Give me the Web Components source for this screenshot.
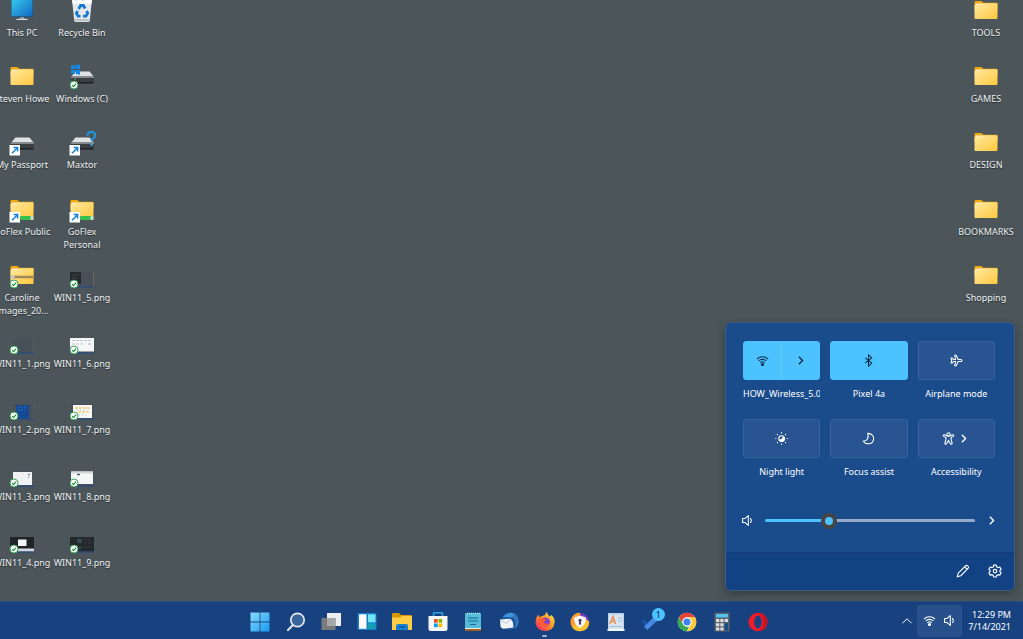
<!DOCTYPE html>
<html lang="en">
<head>
<meta charset="utf-8">
<meta name="viewport" content="width=device-width, initial-scale=1">
<title>Desktop</title>
<style>
    body {
        margin: 0;
        font-family: "Noto Sans", "Open Sans", sans-serif;
        font-size: 9px;
        color: #fff;
    }
</style>
</head>
<body>
<desktop-shell></desktop-shell>

<script>
// Gradients used by several icons
const folderDefs = `
    <defs><linearGradient id="f" x1="0" y1="0" x2="1" y2="1">
        <stop offset="0" stop-color="#ffe9a2"/><stop offset="1" stop-color="#ffc83d"/>
    </linearGradient></defs>`

const folder = `${folderDefs}
    <path d="M.5 4a1 1 0 0 1 1-1h5.800l2.200 1.800H22.500a1 1 0 0 1 1 1V12H.5z" fill="#f0a90c"/>
    <path d="M1.500 5.500h7v2h-7z" fill="#f4f1e6"/>
    <path d="M.5 7.600a1 1 0 0 1 1-1h6l1.600-1.400h13.400a1 1 0 0 1 1 1V20a1 1 0 0 1-1 1h-21a1 1 0 0 1-1-1z" fill="url(#f)"/>`

const drive = `
    <path d="M5.500 7.500h14l4.500 5.500H1z" fill="#dfe1e3"/>
    <rect x="1" y="12.500" width="23" height="7.500" rx=".8" fill="#3c3f42"/>
    <path d="M1 12.500h23v1.500H1z" fill="#85898c"/>
    <path d="M2 18h21v1.300H2z" fill="#1f2123"/>`

const syncBadge = `
    <circle cx="4" cy="21" r="4" fill="#fff" stroke="#2d9c4b" stroke-width=".9"/>
    <path d="M2 21.200l1.500 1.500 2.600-3" fill="none" stroke="#1f8f3d" stroke-width="1.200"/>`

const shortcutBadge = `
    <rect x="-.5" y="15" width="10.500" height="10.500" fill="#fff"/>
    <path d="M2 23.200l5-5M3.600 17.600h4v4" fill="none" stroke="#1681d8" stroke-width="1.500"/>`

const shareBar = `
    <rect x="10" y="19" width="13.500" height="4" rx="1" fill="#35c14c"/>
    <rect x="20.500" y="19" width="3" height="4" rx="1" fill="#cfd8d2"/>`

/**
 * Draws a small screenshot thumbnail
 * @param {string} inner
 * @returns {string}
 */
function thumbnail(inner) {
    return `<rect x="0" y="9" width="24" height="15.500" fill="#485157"/>${inner}
        <path d="M7 23.500h17v1H7z" fill="#214d8d"/>${syncBadge}`
}

const edgeDots = '<path d="M1 9v11M23.400 9v14" stroke="#666b6a" stroke-width="1" stroke-dasharray="1.500 1.500"/>'

const desktopArt = {
    'pc': `<defs><linearGradient id="m" x1="0" y1="0" x2="1" y2="1"><stop offset="0" stop-color="#38cdee"/><stop offset="1" stop-color="#1167c4"/></linearGradient></defs>
        <rect x="1" y="-1" width="22" height="20" rx="1" fill="#194a73"/><rect x="1.500" y="0" width="21" height="18.300" fill="url(#m)"/>
        <path d="M10 19h4v2h-4z" fill="#8b969d"/><path d="M6.500 20.800h11V22h-11z" fill="#d9dfe2"/>`,
    'bin': `<path d="M2 1h20l-2.200 21.500q-.2 1.500-1.500 1.500H5.700q-1.300 0-1.500-1.500z" fill="#e4e8ea"/>
        <path d="M2 1l4 2.500L9 1l4 3 4-3 5 1.500-.4 3H2.400z" fill="#fff"/><path d="M5 21h14v2.300H5z" fill="#bcc3c7"/>
        <g fill="none" stroke="#1679d3" stroke-width="2.800"><path d="M8.600 11l2-3.500h2.800l1.700 3"/><path d="M16.500 13l1.200 2.200-1.700 2.900H13"/><path d="M10.500 18.100H8.100L6.400 15.200l1.200-2.200"/></g>`,
    'folder': folder,
    'windows-drive': `${drive}<path d="M1 1.700l4-.6v4H1zM5.800 1l4.200-.6v4.700H5.800zM1 6h4v4l-4-.5zM5.800 6H10v4.700l-4.200-.6z" fill="#1089e8"/>
        <circle cx="5" cy="15" r=".8" fill="#36d14b"/>${syncBadge}`,
    'drive': drive + shortcutBadge,
    'unknown-drive': `${drive}<path d="M17.500 6q0-4.200 4-4.200 3.600 0 3.600 3.400 0 2-2.100 3.400-1.300.9-1.300 2.600" fill="none" stroke="#2592d8" stroke-width="2.200"/>
        <circle cx="21.600" cy="14.500" r="1.400" fill="#3aa4e4"/>${shortcutBadge}`,
    'shared-folder': folder + shareBar + shortcutBadge,
    'zip': `${folder}<path d="M.5 12.500h23v3H.5z" fill="#d6a544"/><path d="M1 14h22" stroke="#8b816d" stroke-width="1.500"/>
        <rect x="1" y="12.500" width="3.500" height="3" fill="#c9cdd1"/>${syncBadge}`,
    'shot1': thumbnail(edgeDots),
    'shot2': thumbnail(`${edgeDots}<path d="M6 10h13v13.500H6z" fill="#134995"/><path d="M8 12h9M8 15h9" stroke="#2860a9" stroke-width="1.500" stroke-dasharray="2 1"/>`),
    'shot3': thumbnail(`${edgeDots}<path d="M3 10h19v13H3z" fill="#f1f3f3"/><path d="M18 12.500h2M18 15h1" stroke="#7b8fa8" stroke-width="1.300"/>`),
    'shot4': thumbnail(`<path d="M0 9h24v12H0z" fill="#202328"/><path d="M8 11.500h8.500V18H8z" fill="#f4f5f5"/><path d="M8 20.500h16v3H8z" fill="#d6d8dc"/>`),
    'shot5': thumbnail(`<path d="M0 9h11v12H0z" fill="#252a2e"/><path d="M2 12h7M2 15h5" stroke="#444a4e" stroke-width="1" stroke-dasharray="2 1"/><path d="M23.500 9v15" stroke="#6d675f"/>`),
    'shot6': thumbnail(`<path d="M0 9h24v13.500H0z" fill="#f4f6f7"/><path d="M2 11.500h20M2 15h12" stroke="#c3c6cc" stroke-width="1.200" stroke-dasharray="3 1"/><path d="M18 15h3" stroke="#b9a8d0"/>`),
    'shot7': thumbnail(`<path d="M3 10h19v13H3z" fill="#f7f8f6"/><path d="M5 13h15M8 17h12" stroke="#f0cf78" stroke-width="1.500" stroke-dasharray="3 1"/><path d="M7 15h12M9 20h9" stroke="#98c7e0" stroke-width="1" stroke-dasharray="1 2"/>`),
    'shot8': thumbnail(`<path d="M1 9.500h22V22H1z" fill="#f5f6f6"/><path d="M1 9.500h22v2H1z" fill="#d2d8dc"/><path d="M7 12.500h3" stroke="#4b5863" stroke-width="1.500"/>`),
    'shot9': thumbnail(`<path d="M0 9h24v14.500H0z" fill="#25292c"/><path d="M7 11h5v4H7z" fill="#374a58"/><path d="M14 12h8M14 15h8M9 19h13" stroke="#353b3f" stroke-dasharray="3 1"/><path d="M9 20h2" stroke="#1d79d1"/>`)
}

const lineArt = {
    'wifi': '<path d="M1.200 6.200a9.600 9.600 0 0 1 13.600 0M3.300 8.600a6.600 6.600 0 0 1 9.400 0M5.400 10.900a3.700 3.700 0 0 1 5.200 0"/><circle cx="8" cy="13" r="1.200" fill="currentColor"/>',
    'right': '<path d="M6 3.500L10.500 8 6 12.500" stroke-width="1.700"/>',
    'up': '<path d="M2 11l6-6 6 6"/>',
    'bluetooth': '<path d="M3.800 4.800l8.200 6.400L8 15V1l4 3.800-8.200 6.400"/>',
    'plane': '<path d="M14.800 8q0-1.300-1.600-1.300H10L7.600 1.500H5.800l1 5.200H4L2.800 5H1.300l.7 3-.7 3h1.500L4 9.300h2.800l-1 5.200h1.800L10 9.300h3.200q1.600 0 1.600-1.300z"/>',
    'night': '<circle cx="8" cy="8" r="3.300"/><path d="M10.300 5.700A3.300 3.300 0 1 1 5.700 10.300Q9.500 9.800 10.300 5.700z" fill="currentColor"/><g stroke-linecap="round" stroke-width="1.500"><path d="M8 .9v.2M8 14.900v.2M.9 8h.2M14.900 8h.2M3 3l.1.100M12.900 12.900l.1.100M3 13l.1-.1M12.900 3.100L13 3"/></g>',
    'moon': '<path d="M7 1.700c5 .3 7.700 3 7.300 7.100-.4 3.800-3.300 5.900-6.800 5.700-2.600-.2-4.700-1.200-5.900-3.200C6 11 9 7.500 7 1.700z"/>',
    'person': '<circle cx="8" cy="3" r="2"/><path d="M6 4.600L3 3.400q-1.200-.2-1.500.8 0 .8.700 1.200l2.600 1.300v2.500l-1.300 4.500q0 1 .8 1.300 1.100.1 1.500-.8L8 10.500l2.200 3.700q.4.900 1.500.8.800-.3.800-1.300l-1.300-4.500V6.700l2.600-1.300q.7-.4.700-1.200-.3-1-1.500-.8L10 4.600q-2 1-4 0z"/>',
    'speaker': '<path d="M9 2v12l-4-3.500H2v-5h3zM11.500 5q2.400 3 0 6" stroke-linejoin="round"/>',
    'pencil': '<path d="M1.500 14.500l1-4L11 2q1.200-1 2.400.1 1.600 1.300.6 2.600L5.500 13.400zM9.800 3.200l3 3"/>',
    'gear': '<path d="M6.500 1.300h3l.5 2 1.500.8 2-.6 1.500 2.600L13.600 7.500v1.300l1.400 1.300-1.500 2.600-2-.5-1.500.8-.5 1.900h-3L6 13l-1.500-.8-2 .5L1 10.100l1.400-1.300V7.500L1 6.100l1.500-2.600 2 .6L6 3.300z" stroke-linejoin="round"/><circle cx="8" cy="8.100" r="2"/>'
}

const appArt = {
    'Start': `<defs><linearGradient id="s" x1="0" y1="0" x2="1" y2="1" ><stop offset="0" stop-color="#8bdcff"/><stop offset="1" stop-color="#1599ee"/></linearGradient></defs>
        <path d="M.5.5H9.600V9.600H.5zM10.400.5h9.100V9.600h-9.100zM.5 10.400H9.600v9.100H.5zM10.400 10.400h9.100v9.100h-9.100z" fill="url(#s)"/>`,
    'Search': `<circle cx="11.500" cy="8" r="6.700" fill="#39659a" stroke="#e6e9ec" stroke-width="1.700"/><path d="M7 13l-5 5" stroke="#dfe3e7" stroke-width="2.200" stroke-linecap="round"/>`,
    'Task View': `<path d="M6 1h14v13H6z" fill="#eceeef"/><path d="M.500 6h14v12h-14z" fill="#787a7c"/><path d="M6 6h8.500v8H6z" fill="#a4a6a8"/>`,
    'Widgets': `<rect x=".5" y="1" width="19" height="17" rx="1" fill="#1382ca"/><path d="M2 2.300h7.500v14.500H2z" fill="#fafafa"/><path d="M11 2.300h7.500v8H11z" fill="#72e4f2"/><path d="M11 11.500h7.500v5.300H11z" fill="#169fb4"/>`,
    'File Explorer': `<path d="M0 2q0-1 1-1h6l2 2h10q1 0 1 1v6H0z" fill="#d99600"/><path d="M0 5.500h8L10 4h10v14H0z" fill="#ffcc45"/><path d="M4 18v-4q0-2 2-2h8q2 0 2 2v4z" fill="#1680d3"/><path d="M7 15h6" stroke="#0b549e" stroke-width="1.500"/>`,
    'Store': `<path d="M5.500 5V1.700q0-1 1-1h7q1 0 1 1V5" fill="none" stroke="#29a3e6" stroke-width="1.600"/><path d="M.5 4h19v13q0 2-2 2h-15q-2 0-2-2z" fill="#f4f6f7"/><path d="M6 7h3.700v3.700H6z" fill="#f1511b"/><path d="M10.500 7h3.700v3.700h-3.700z" fill="#7cbb00"/><path d="M6 11.500h3.700v3.700H6z" fill="#00a1f1"/><path d="M10.500 11.500h3.700v3.700h-3.700z" fill="#ffbb00"/>`,
    'Notepad': `<rect x="2" y="1" width="16" height="18" rx="1" fill="#57bad8"/><path d="M2 16.500h16V19H2z" fill="#a35f22"/><path d="M2 16h16v1H2z" fill="#eee"/><path d="M4 1.500h13" stroke="#a9e5f2" stroke-width="1.500" stroke-dasharray="1 1"/><path d="M5 6h10M5 9h10M7 12.500h6" stroke="#126a9a" stroke-width="1.200"/>`,
    'Thunderbird': `<circle cx="11" cy="9.500" r="8.500" fill="#1b579e"/><path d="M4 5Q7 .7 12 .8q5 .2 7 5-4-2-6-.5L8 5z" fill="#3c93db"/><path d="M13 5q6 3 2.500 12 5-3 4-9-.6-4-4-6z" fill="#3475be"/><path d="M1 7.500l9.500-.8q3 1 3.500 4l.5 4.800-9.700 1.300q-2.500 0-3.300-2.500z" fill="#f1f3f5"/><path d="M1 7.500l6.500 4 4.500-4.700" fill="none" stroke="#b8c7d8"/>`,
    'Firefox': `<defs><linearGradient id="x" x1="1" y1="0" x2="0" y2="1"><stop offset="0" stop-color="#fff14a"/><stop offset=".45" stop-color="#ff9624"/><stop offset="1" stop-color="#f5156c"/></linearGradient></defs>
        <path d="M10 3q0-2 2-3 0 2.500 2.500 4.500L16.500 3q3.500 3 3 8-1 8-9.500 8-8.700-.5-9.500-8.500Q.3 6 3 2.500L4.500 5z" fill="url(#x)"/><circle cx="10.500" cy="10" r="4.500" fill="#8043c9"/><path d="M4 7q2.500-2 5 0l2 .5q-.5 2-2.500 2 .5 3 5.500 2-1 3.500-5 3-4.500-1-5-7.500z" fill="#ff5a32"/>`,
    'Secure Browser': `<circle cx="10" cy="10" r="9.300" fill="#713bb5"/><path d="M2 5Q6 0 10 1v10L2 15Q-1 10 2 5z" fill="#ff9d2a"/><path d="M2 15q2 4 8 4.300 9-.8 9.300-9.300L15 6z" fill="#ffc42d"/><path d="M10 3.500l6 2q0 7.500-6 10.500-6-3-6-10.500z" fill="#f7f7fa"/><circle cx="10" cy="8.300" r="1.500" fill="#43366a"/><path d="M9.300 9h1.400l.5 3.500H8.800z" fill="#43366a"/>`,
    'WordPad': `<rect x="2" y="1" width="16" height="18" fill="#b5cfe4"/><rect x="3" y="2.500" width="14" height="15" fill="#d9e6f1"/><path d="M4 12L7 4.500 9.500 12M5.500 9.500H9" stroke="#ec9150" stroke-width="1.500" fill="none"/><path d="M12 6h4M12 9h4M4 14.500h12" stroke="#9cbcd9" stroke-width="1.200"/><path d="M1.500 17h17v2h-17z" fill="#f4f6f8"/>`,
    'To Do': `<path d="M0 10l3-3 5 5-3 3z" fill="#17519f"/><path d="M3 14.500L14 4l3.500 3.500L6.200 18z" fill="#4689e8"/>`,
    'Chrome': `<circle cx="10" cy="10" r="9.300" fill="#fff"/><path d="M1.950 5.350A9.300 9.300 0 0 1 18.050 5.350H10a4.700 4.700 0 0 0-4.100 7z" fill="#e84436"/><path d="M1.950 5.350l4 7a4.700 4.700 0 0 0 6.100 1.800L10 19.300A9.300 9.300 0 0 1 1.950 5.350z" fill="#33a853"/><path d="M18.050 5.350A9.300 9.300 0 0 1 10 19.300l4-7a4.700 4.700 0 0 0-4-6.950z" fill="#fcc934"/><circle cx="10" cy="10" r="4.500" fill="#fff"/><circle cx="10" cy="10" r="3.600" fill="#3f83ee"/>`,
    'Calculator': `<rect x="2.500" y=".5" width="15" height="19" rx="1" fill="#5d6368"/><path d="M4 2h12v3.500H4z" fill="#50c5ee"/><g fill="#dbdfe2"><path d="M4 7h3.300v3H4zM8.300 7h3.300v3H8.300zM12.700 7H16v3h-3.300zM4 11.200h3.300v3H4zM8.300 11.200h3.300v3H8.300zM4 15.400h3.300v3H4zM8.300 15.400h3.300v3H8.300z"/></g><path d="M12.700 11.200H16v7.200h-3.300z" fill="#11508f"/>`,
    'Opera': `<ellipse cx="10" cy="10" rx="9.500" ry="9.300" fill="#ed1c2b"/><path d="M11 1q7.500.5 8.500 9-1 8.500-8.500 9l3-3q3-6 0-12z" fill="#c81325"/><ellipse cx="10" cy="10" rx="3.700" ry="6.500" fill="#17427f"/>`
}

class LineIcon extends HTMLElement {
    connectedCallback() {
        const shadowRoot = this.attachShadow({ mode: 'open' })
        shadowRoot.innerHTML = `
        <style>
            :host { display: block; width: 13px; height: 13px; }
            svg { display: block; width: 100%; height: 100%; fill: none; stroke: currentColor; stroke-width: 1.3; }
        </style>
        <svg viewBox="0 0 16 16" aria-hidden="true">${lineArt[this.getAttribute('name')]}</svg>`
    }
}

customElements.define('line-icon', LineIcon)

class DesktopIcon extends HTMLElement {
    connectedCallback() {
        const shadowRoot = this.attachShadow({ mode: 'open' })
        shadowRoot.innerHTML = `
        <style>
            :host { display: block; min-height: 0; }
            a {
                display: flex;
                flex-direction: column;
                align-items: center;
                gap: 2px;
                color: #eef0f1;
                text-decoration: none;
                text-align: center;
                line-height: 13px;
                text-shadow: 0 1px 1px rgba(0, 0, 0, 0.5);
            }
            svg { width: 26px; height: 26px; overflow: visible; flex: none; }
        </style>
        <a href="#">
            <svg viewBox="-1 0 26 26" aria-hidden="true">${desktopArt[this.getAttribute('art')]}</svg>
            <span><slot></slot></span>
        </a>`
    }
}

customElements.define('desktop-icon', DesktopIcon)

class QuickTile extends HTMLElement {
    connectedCallback() {
        const icon = this.getAttribute('icon')
        const arrow = '<line-icon name="right"></line-icon>'
        let buttons = `<button aria-labelledby="label"><line-icon name="${icon}"></line-icon>${this.hasAttribute('more') ? arrow : ''}</button>`
        if (this.hasAttribute('split')) {
            buttons = `<button aria-labelledby="label"><line-icon name="${icon}"></line-icon></button>
            <button aria-label="Manage connections">${arrow}</button>`
        }

        const shadowRoot = this.attachShadow({ mode: 'open' })
        shadowRoot.innerHTML = `
        <style>
            :host { display: flex; flex-direction: column; gap: 7px; min-width: 0; }
            .buttons {
                display: flex;
                height: 39px;
                box-sizing: border-box;
                overflow: hidden;
                border: 1px solid #37629c;
                border-radius: 3px;
                background: #285591;
            }
            button {
                display: flex;
                flex: 1;
                align-items: center;
                justify-content: center;
                gap: 2px;
                padding: 0;
                border: 0;
                background: none;
                color: #fff;
            }
            button + button { border-left: 1px solid #66c8fb; }
            :host([on]) .buttons { background: #4cc2ff; border-color: #4cc2ff; }
            :host([on]) button { color: #0b2d49; }
            #label { line-height: 14px; text-align: center; white-space: nowrap; overflow: hidden; }
            :host([split]) #label { text-align: left; }
        </style>
        <div class="buttons">${buttons}</div>
        <div id="label"><slot></slot></div>`
    }
}

customElements.define('quick-tile', QuickTile)

class VolumeSlider extends HTMLElement {
    connectedCallback() {
        const shadowRoot = this.attachShadow({ mode: 'open' })
        shadowRoot.innerHTML = `
        <style>
            :host { display: flex; align-items: center; }
            label { padding-right: 11px; }
            input {
                flex: 1;
                min-width: 0;
                height: 16px;
                margin: 0;
                appearance: none;
                background: none;
            }
            input::-webkit-slider-runnable-track {
                height: 3px;
                border-radius: 2px;
                background: linear-gradient(to right, #4cc2ff var(--level), #98a9ca var(--level));
            }
            input::-webkit-slider-thumb {
                appearance: none;
                box-sizing: border-box;
                width: 16px;
                height: 16px;
                margin-top: -6px;
                border: 4px solid #454545;
                border-radius: 50%;
                background: #4cc2ff;
            }
            button { margin-left: 10px; padding: 0; border: 0; background: none; color: #fff; }
        </style>
        <label for="volume" aria-label="Volume"><line-icon name="speaker"></line-icon></label>
        <input id="volume" type="range" min="0" max="100" value="29">
        <button aria-label="Select a sound output"><line-icon name="right"></line-icon></button>`

        const input = shadowRoot.querySelector('input')
        const update = () => input.style.setProperty('--level', input.value + '%')
        input.addEventListener('input', update)
        update()
    }
}

customElements.define('volume-slider', VolumeSlider)

class QuickSettings extends HTMLElement {
    connectedCallback() {
        const shadowRoot = this.attachShadow({ mode: 'open' })
        shadowRoot.innerHTML = `
        <style>
            :host {
                display: block;
                box-sizing: border-box;
                width: 290px;
                overflow: hidden;
                border: 1px solid #3f5d80;
                border-radius: 6px;
                background: #1a4b8b;
                box-shadow: 0 3px 8px rgba(0, 0, 0, 0.3);
            }
            .tiles {
                display: grid;
                grid-template-columns: repeat(3, minmax(0, 1fr));
                gap: 18px 10px;
                padding: 18px 19px 0 17px;
            }
            volume-slider { padding: 33px 16px 24px 15px; }
            footer {
                display: flex;
                align-items: center;
                justify-content: flex-end;
                gap: 18px;
                height: 35px;
                padding: 0 12px 2px 0;
                border-top: 1px solid #123c78;
                background: #124283;
            }
            footer button { padding: 0; border: 0; background: none; color: #fff; }
            footer line-icon { width: 14px; height: 14px; }
        </style>
        <div class="tiles">
            <quick-tile icon="wifi" on split>HOW_Wireless_5.0</quick-tile>
            <quick-tile icon="bluetooth" on>Pixel 4a</quick-tile>
            <quick-tile icon="plane">Airplane mode</quick-tile>
            <quick-tile icon="night">Night light</quick-tile>
            <quick-tile icon="moon">Focus assist</quick-tile>
            <quick-tile icon="person" more>Accessibility</quick-tile>
        </div>
        <volume-slider></volume-slider>
        <footer>
            <button aria-label="Edit quick settings"><line-icon name="pencil"></line-icon></button>
            <button aria-label="All settings"><line-icon name="gear"></line-icon></button>
        </footer>`
    }
}

customElements.define('quick-settings', QuickSettings)

class TaskbarApp extends HTMLElement {
    connectedCallback() {
        const name = this.getAttribute('name')
        const badge = this.getAttribute('badge')
        const shadowRoot = this.attachShadow({ mode: 'open' })
        shadowRoot.innerHTML = `
        <style>
            :host { display: grid; }
            button {
                position: relative;
                display: grid;
                place-items: center;
                padding: 2px 0 0;
                border: 0;
                background: none;
                color: #0b2d49;
                font: inherit;
            }
            svg { width: 20px; height: 20px; }
            .badge {
                position: absolute;
                top: 6px;
                right: 4px;
                width: 13px;
                border-radius: 50%;
                background: #4cc2ff;
                line-height: 13px;
            }
            :host([running]) button::after {
                content: '';
                position: absolute;
                bottom: 2px;
                left: calc(50% - 3px);
                width: 5px;
                height: 2px;
                border-radius: 1px;
                background: #a4b4cc;
            }
        </style>
        <button aria-label="${name}">
            <svg viewBox="0 0 20 20" aria-hidden="true">${appArt[name]}</svg>
            ${badge ? `<span class="badge">${badge}</span>` : ''}
        </button>`
    }
}

customElements.define('taskbar-app', TaskbarApp)

class TaskBar extends HTMLElement {
    connectedCallback() {
        const apps = Object.keys(appArt).map(name => {
            const state = name === 'Firefox' ? 'running' : name === 'To Do' ? 'badge="1"' : ''
            return `<taskbar-app name="${name}" ${state}></taskbar-app>`
        }).join('')

        const shadowRoot = this.attachShadow({ mode: 'open' })
        shadowRoot.innerHTML = `
        <style>
            :host {
                display: grid;
                grid-template-columns: 1fr auto 1fr;
                height: 38px;
                box-sizing: border-box;
                border-top: 1px solid #284c7c;
                background: #17427f;
            }
            .apps {
                display: grid;
                grid-template-columns: repeat(15, 1fr);
                grid-column: 2;
                width: 533px;
                margin-right: 5px;
            }
            .tray { display: flex; align-items: center; justify-content: flex-end; padding-right: 12px; }
            button { padding: 0; border: 0; background: none; color: #fff; font: inherit; }
            .status {
                display: flex;
                align-items: center;
                gap: 7px;
                height: 32px;
                margin: 0 6px 0 4px;
                padding: 0 6px;
                border-radius: 3px;
                background: #28508a;
            }
            .up line-icon { width: 12px; height: 12px; }
            .clock { text-align: right; line-height: 12px; }
            time { display: block; }
        </style>
        <div class="apps">${apps}</div>
        <div class="tray">
            <button class="up" aria-label="Show hidden icons"><line-icon name="up"></line-icon></button>
            <button class="status" aria-label="Network and volume"><line-icon name="wifi"></line-icon><line-icon name="speaker"></line-icon></button>
            <button class="clock"><time>12:29 PM</time><time>7/14/2021</time></button>
        </div>`
    }
}

customElements.define('task-bar', TaskBar)

// Desktop icons, row by row
const leftIcons = [
    ['pc', 'This PC'], ['bin', 'Recycle Bin'],
    ['folder', 'Steven Howe'], ['windows-drive', 'Windows (C)'],
    ['drive', 'My Passport'], ['unknown-drive', 'Maxtor'],
    ['shared-folder', 'GoFlex Public'], ['shared-folder', 'GoFlex<br>Personal'],
    ['zip', 'Caroline<br>Images_20...'], ['shot5', 'WIN11_5.png'],
    ['shot1', 'WIN11_1.png'], ['shot6', 'WIN11_6.png'],
    ['shot2', 'WIN11_2.png'], ['shot7', 'WIN11_7.png'],
    ['shot3', 'WIN11_3.png'], ['shot8', 'WIN11_8.png'],
    ['shot4', 'WIN11_4.png'], ['shot9', 'WIN11_9.png']
]

const rightIcons = ['TOOLS', 'GAMES', 'DESIGN', 'BOOKMARKS', 'Shopping'].map(label => ['folder', label])

/**
 * Builds the markup for a list of desktop icons
 * @param {string[][]} icons
 * @returns {string}
 */
function renderIcons(icons) {
    return icons.map(([art, label]) => `<desktop-icon art="${art}">${label}</desktop-icon>`).join('')
}

class DesktopShell extends HTMLElement {
    connectedCallback() {
        const shadowRoot = this.attachShadow({ mode: 'open' })
        shadowRoot.innerHTML = `
        <style>
            :host {
                display: flex;
                flex-direction: column;
                height: 100vh;
                overflow: hidden;
                background: #4b555a;
            }
            main {
                position: relative;
                display: flex;
                flex: 1;
                justify-content: space-between;
                min-height: 0;
            }
            .icons {
                display: grid;
                grid-template-rows: repeat(9, minmax(0, 1fr));
                margin: -2px 7px 7px -8px;
                white-space: nowrap;
            }
            .left { grid-template-columns: 60px 60px; }
            .right { grid-template-columns: 60px; }
            quick-settings { position: absolute; right: 8px; bottom: 10px; }
        </style>
        <main>
            <div class="icons left">${renderIcons(leftIcons)}</div>
            <div class="icons right">${renderIcons(rightIcons)}</div>
            <quick-settings></quick-settings>
        </main>
        <task-bar></task-bar>`
    }
}

customElements.define('desktop-shell', DesktopShell)
</script>
</body>
</html>
